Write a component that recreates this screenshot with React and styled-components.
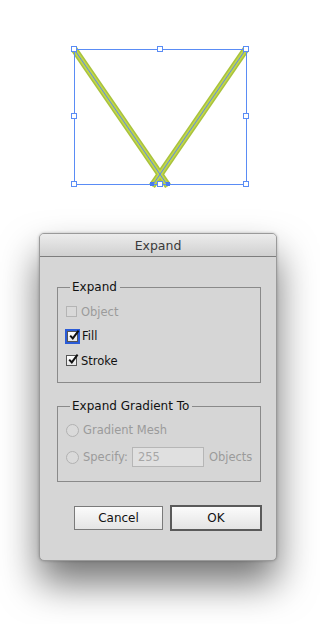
import React from 'react';
import styled, { createGlobalStyle } from 'styled-components';

const Global = createGlobalStyle`
  html, body {
    margin: 0;
    padding: 0;
    background: #ffffff;
  }
  body {
    font-family: 'DejaVu Sans', 'Liberation Sans', sans-serif;
    width: 320px;
    height: 624px;
    overflow: hidden;
  }
`;

const Page = styled.div`
  width: 320px;
  height: 624px;
  display: flex;
  flex-direction: column;
`;

const Artboard = styled.svg`
  display: block;
  width: 320px;
  height: 200px;
  margin-bottom: 33px;
  flex-shrink: 0;
`;

const Dialog = styled.div`
  margin-left: 39px;
  width: 238px;
  height: 328px;
  box-sizing: border-box;
  border: 1px solid #9a9a9a;
  border-radius: 5px;
  background: #d6d6d6;
  box-shadow: 0 22px 38px rgba(0, 0, 0, 0.55), 0 0 3px rgba(0, 0, 0, 0.25);
  display: flex;
  flex-direction: column;
  overflow: hidden;
`;

const TitleBar = styled.div`
  height: 22px;
  border-bottom: 1px solid #7d7d7d;
  background: linear-gradient(#ececec, #d0d0d0);
  display: flex;
  align-items: center;
  justify-content: center;
  font-size: 12.5px;
  color: #3a3a3a;
`;

const Body = styled.div`
  padding: 23px 0 0 17px;
  display: flex;
  flex-direction: column;
  gap: 16px;
`;

const Group = styled.fieldset`
  margin: 0;
  width: 204px;
  min-width: 0;
  box-sizing: border-box;
  padding: ${p => p.$pad};
  border: 1px solid #8a8a8a;
  display: flex;
  flex-direction: column;
`;

const Legend = styled.legend`
  padding: 0 3px 0 2px;
  margin-left: 4px;
  font-size: 12px;
  color: #111;
  line-height: 14px;
`;

const Row = styled.div`
  height: ${p => p.$h}px;
  display: flex;
  align-items: center;
  gap: 4px;
  font-size: 11.5px;
  white-space: nowrap;
  color: ${p => (p.$disabled ? '#9b9b9b' : '#111')};
`;

const Box = styled.span`
  width: 11px;
  height: 11px;
  box-sizing: border-box;
  border: 1px solid ${p => (p.$disabled ? '#b4b4b4' : '#555')};
  background: ${p => (p.$disabled ? '#d9d9d9' : 'linear-gradient(#ffffff, #e6e6e6)')};
  box-shadow: ${p => (p.$focus ? '0 0 0 2px #2a5bd7' : 'none')};
  margin-left: ${p => (p.$focus ? '1px' : '0')};
  position: relative;
  display: inline-block;
  flex-shrink: 0;
`;

const Tick = styled.svg`
  position: absolute;
  left: 0px;
  top: -3px;
  width: 12px;
  height: 12px;
`;

const Radio = styled.span`
  width: 13px;
  height: 13px;
  box-sizing: border-box;
  border-radius: 50%;
  border: 1px solid #b2b2b2;
  background: #dadada;
  flex-shrink: 0;
`;

const NumField = styled.span`
  width: 72px;
  height: 20px;
  box-sizing: border-box;
  border: 1px solid #b6b6b6;
  background: #e0e0e0;
  display: flex;
  align-items: center;
  padding-left: 5px;
  margin-left: 0;
  margin-right: 1px;
  color: #a6a6a6;
  flex-shrink: 0;
`;

const Buttons = styled.div`
  margin-top: 24px;
  display: flex;
  gap: 7px;
  padding-left: 34px;
`;

const Button = styled.button`
  width: ${p => p.$w}px;
  height: ${p => (p.$primary ? 26 : 24)}px;
  margin-top: ${p => (p.$primary ? -1 : 0)}px;
  box-sizing: border-box;
  border: ${p => (p.$primary ? '2px solid #5a5a5a' : '1px solid #7a7a7a')};
  background: linear-gradient(#fbfbfb, #e4e4e4);
  font-family: 'DejaVu Sans', sans-serif;
  font-size: 12px;
  color: #111;
  padding: 0;
  border-radius: 0;
`;

const Check = ({ focus, disabled, checked }) => (
  <Box $focus={focus} $disabled={disabled}>
    {checked && (
      <Tick viewBox="0 0 12 12">
        <path d="M2.2 6.6 L4.8 9.4 L10.6 1.6" fill="none" stroke="#111" strokeWidth="2" />
      </Tick>
    )}
  </Box>
);

const handles = [
  [74, 49], [160, 49], [246, 49],
  [74, 116], [246, 116],
  [74, 184], [160, 184], [246, 184],
];

export default function App() {
  return (
    <Page>
      <Global />
      <Artboard viewBox="0 0 320 200">
        <g strokeLinecap="butt">
          <line x1="74" y1="49" x2="168" y2="186" stroke="#a9c23c" strokeWidth="7" />
          <line x1="246" y1="49" x2="152" y2="186" stroke="#a9c23c" strokeWidth="7" />
          <line x1="74" y1="49" x2="168" y2="186" stroke="#c0d64a" strokeWidth="4" />
          <line x1="246" y1="49" x2="152" y2="186" stroke="#c0d64a" strokeWidth="4" />
          <line x1="74" y1="49" x2="168" y2="186" stroke="#5a86f0" strokeWidth="1" />
          <line x1="246" y1="49" x2="152" y2="186" stroke="#5a86f0" strokeWidth="1" />
        </g>
        <rect x="74.5" y="49.5" width="172" height="135" fill="none" stroke="#5a8cf5" strokeWidth="1" />
        {handles.map(([x, y]) => (
          <rect key={`${x}-${y}`} x={x - 2.5} y={y - 2.5} width="5" height="5" fill="#fff" stroke="#5a8cf5" strokeWidth="1" />
        ))}
        <rect x="150" y="182" width="4" height="4" fill="#4a7cf0" />
        <rect x="166" y="182" width="4" height="4" fill="#4a7cf0" />
      </Artboard>

      <Dialog>
        <TitleBar>Expand</TitleBar>
        <Body>
          <Group $pad="5px 10px 9px 8px">
            <Legend>Expand</Legend>
            <Row $h={25} $disabled>
              <Check disabled />
              Object
            </Row>
            <Row $h={24}>
              <Check focus checked />
              Fill
            </Row>
            <Row $h={25}>
              <Check checked />
              Stroke
            </Row>
          </Group>
          <Group $pad="4px 4px 10px 8px">
            <Legend>Expand Gradient To</Legend>
            <Row $h={26} $disabled>
              <Radio />
              Gradient Mesh
            </Row>
            <Row $h={28} $disabled>
              <Radio />
              Specify:
              <NumField>255</NumField>
              Objects
            </Row>
          </Group>
        </Body>
        <Buttons>
          <Button $w={89}>Cancel</Button>
          <Button $w={92} $primary>OK</Button>
        </Buttons>
      </Dialog>
    </Page>
  );
}
